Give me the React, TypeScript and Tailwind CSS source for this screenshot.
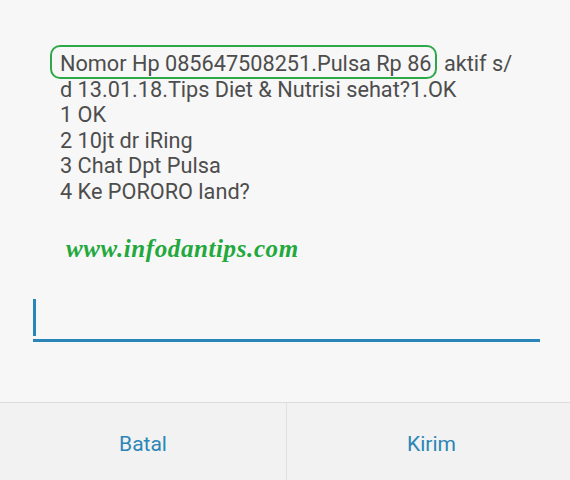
export default function App() {
  const lines = ["1 OK", "2 10jt dr iRing", "3 Chat Dpt Pulsa", "4 Ke PORORO land?"];

  return (
    <main className="flex h-[480px] w-[570px] flex-col bg-[#f7f7f7] font-['Roboto',sans-serif]">
      <section className="flex-1 pl-[60px] pt-[51px]">
        <div className="text-[21.7px] leading-[25.5px] text-[#4d4d4d]">
          <p>
            <span className="relative mr-[7px]">
              <span className="absolute -left-[10px] -right-[5px] -top-[6px] -bottom-[3px] rounded-[10px] border-[2.5px] border-[#2ea84a]" />
              Nomor Hp 085647508251.Pulsa Rp 86
            </span>{" "}
            aktif s/
          </p>
          <p>d 13.01.18.Tips Diet &amp; Nutrisi sehat?1.OK</p>
          {lines.map((l) => (
            <p key={l}>{l}</p>
          ))}
        </div>
        <p className="mt-[26px] pl-[6px] font-['Liberation_Serif',serif] text-[25px] font-bold italic tracking-[0.6px] text-[#22a83c]">
          www.infodantips.com
        </p>
      </section>

      <div className="mb-[60px] ml-[33px] mr-[30px] flex items-end">
        <div className="flex h-[44px] w-full items-start border-b-[3px] border-[#2a86b8]">
          <span className="mt-[1px] h-[37px] w-[3px] bg-[#2a86b8]" />
        </div>
      </div>

      <footer className="grid h-[78px] grid-cols-[287px_1fr] border-t border-[#dcdcdc] bg-[#f2f2f2] text-[21px] text-[#2c86b6]">
        <button className="border-r border-[#e2e2e2] pt-[7px]">Batal</button>
        <button className="pt-[7px] pl-[6px]">Kirim</button>
      </footer>
    </main>
  );
}
